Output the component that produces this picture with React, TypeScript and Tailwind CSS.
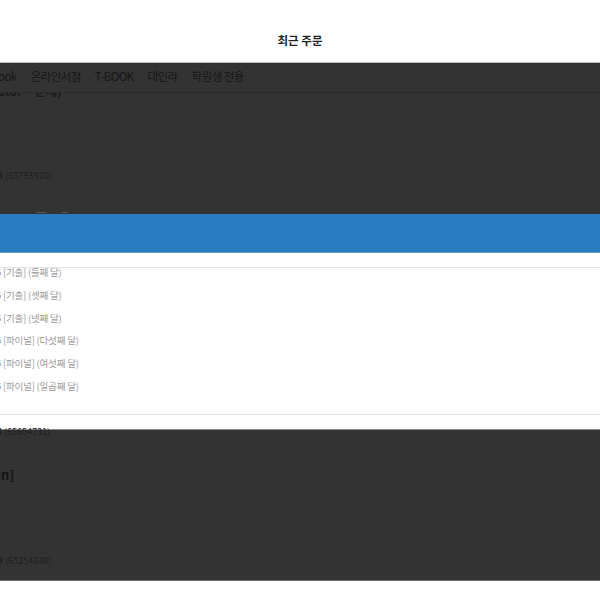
const navItems = ["ook", "온라인서점", "T-BOOK", "대인라", "학원생 전용"];

const orders = [
  "5 [기출] (둘째 달)",
  "5 [기출] (셋째 달)",
  "5 [기출] (넷째 달)",
  "5 [파이널] (다섯째 달)",
  "5 [파이널] (여섯째 달)",
  "5 [파이널] (일곱째 달)",
];

export default function App() {
  return (
    <div className="w-[600px] h-[600px] overflow-hidden bg-white font-['Noto_Sans_CJK_KR','Noto_Sans',sans-serif]">
      {/* header */}
      <div className="h-[62px] flex items-end justify-center pb-[13px]">
        <h1 className="text-[11.5px] leading-[18px] font-bold text-[#222]">최근 주문</h1>
      </div>

      {/* dimmed page behind */}
      <div className="h-[152px] bg-[#333] border-t border-[#bdbdbd] flex flex-col">
        <div className="relative z-10 h-[30px] bg-[#333] border-b border-[#2a2a2a] flex items-start pt-[5px] gap-[14px] text-[11.5px] leading-[16px] tracking-[-0.55px] text-[#161616]">
          {navItems.map((n) => (
            <span key={n} className="first:-ml-[2px]">{n}</span>
          ))}
        </div>
        <p className="-mt-[10px] -ml-[2px] text-[12px] leading-[16px] font-bold text-[#1a1a1a]">ator · 문제)</p>
        <p className="mt-[70px] -ml-[2px] text-[9px] leading-[14px] text-[#1e1e1e]">
          <span className="font-bold">3</span> (65793378)
        </p>
        <div className="mt-auto ml-[36px] flex gap-[16px] pb-[1px]">
          <span className="w-[10px] h-[1px] bg-[#555]" />
          <span className="w-[6px] h-[1px] bg-[#555]" />
        </div>
      </div>

      {/* selected bar */}
      <div className="h-[39px] bg-[#2a7bc0] border-b border-[#5b9bd2]" />

      {/* order list */}
      <div className="h-[176px] bg-white flex flex-col">
        <div className="relative z-10 h-[15px] bg-white border-b border-[#e3e3e3]" />
        <ul className="-mt-[7px] flex flex-col text-[9.5px] leading-[22.8px] tracking-[-0.2px] text-[#9a9a9a]">
          {orders.map((o, i) => (
            <li key={i} className="-ml-[4px]">{o}</li>
          ))}
        </ul>
        <div className="mt-auto mb-[14px] border-b border-[#e3e3e3]" />
      </div>

      {/* dimmed page behind, lower part */}
      <div className="h-[152px] bg-[#333] border-t border-[#8a8a8a] border-b border-b-[#6a6a6a] flex flex-col">
        <p className="-mt-[4px] -ml-[3px] text-[9px] leading-[12px] text-[#1e1e1e]">4 (65654731)</p>
        <p className="mt-[29px] -ml-[3px] text-[13px] leading-[16px] font-bold text-[#141414]">in]</p>
        <p className="mt-[71px] -ml-[2px] text-[9px] leading-[14px] text-[#1e1e1e]">
          <span className="font-bold">9</span> (65254330)
        </p>
      </div>
    </div>
  );
}
